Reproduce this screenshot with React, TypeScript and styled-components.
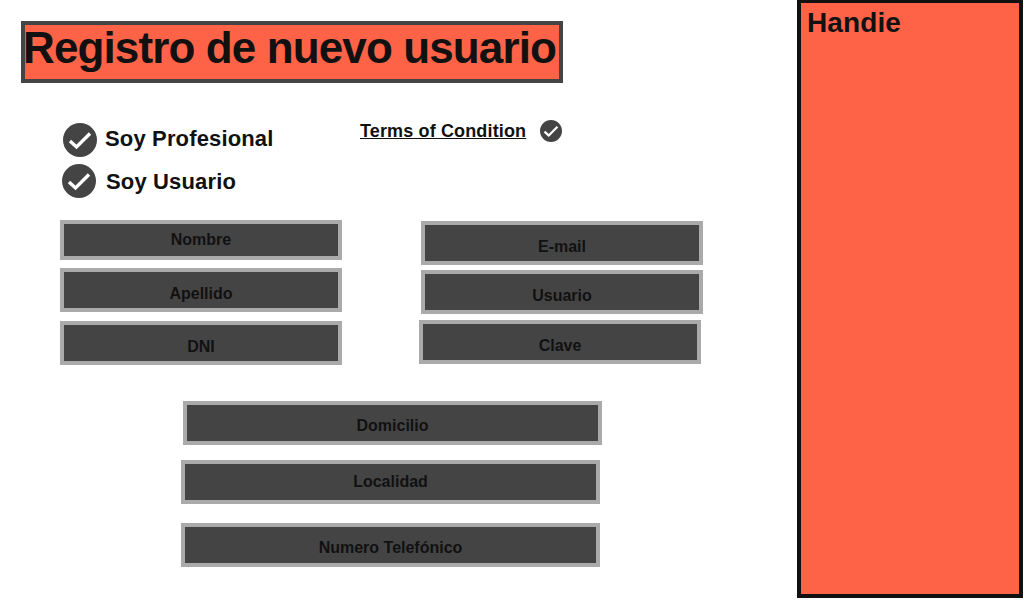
import React from 'react';
import styled, { createGlobalStyle } from 'styled-components';

const GlobalStyle = createGlobalStyle`
  body {
    margin: 0;
    background: #fff;
    color: #111;
    font-family: "Liberation Sans", Arial, sans-serif;
  }
`;

const Page = styled.div`
  display: flex;
  align-items: flex-start;
  width: 1024px;
  height: 600px;
  overflow: hidden;
`;

const Main = styled.main`
  box-sizing: border-box;
  width: 797px;
  padding: 21px 0 0 21px;
`;

const Title = styled.h1`
  box-sizing: border-box;
  width: 542px;
  height: 62px;
  margin: 0;
  border: 4px solid #444;
  background: tomato;
  font-size: 44px;
  font-weight: 700;
  line-height: 46px;
  letter-spacing: -0.02em;
  text-indent: -2px;
  white-space: nowrap;
`;

const TopRow = styled.div`
  display: flex;
  align-items: flex-start;
  margin-top: 37px;
  height: 78px;
`;

const Options = styled.div`
  display: flex;
  flex-direction: column;
  gap: 7px;
  width: 298px;
  margin: 3px 0 0 41px;
`;

const Option = styled.label<{ $indent?: number; $gap: number }>`
  display: flex;
  align-items: center;
  gap: ${(p) => p.$gap}px;
  margin-left: ${(p) => p.$indent ?? 0}px;
  font-size: 22px;
  font-weight: 700;
  letter-spacing: 0.15px;
  color: #111;

  svg {
    flex: none;
  }
`;

const OptionText = styled.span<{ $nudge: number }>`
  margin-top: ${(p) => p.$nudge}px;
`;

const Terms = styled.div`
  display: flex;
  align-items: center;
  gap: 14px;
  font-size: 18px;
  font-weight: 700;
  letter-spacing: 0.14px;

  span {
    text-decoration: underline;
  }
`;

const FieldColumns = styled.div`
  display: flex;
  align-items: flex-start;
  margin-top: 22px;
`;

const FieldColumn = styled.div<{ $left: number; $top?: number }>`
  display: flex;
  flex-direction: column;
  margin-left: ${(p) => p.$left}px;
  margin-top: ${(p) => p.$top ?? 0}px;
`;

const Field = styled.div<{
  $width?: number;
  $height?: number;
  $above?: number;
  $indent?: number;
  $drop?: number;
}>`
  box-sizing: border-box;
  display: flex;
  align-items: center;
  justify-content: center;
  width: ${(p) => p.$width ?? 282}px;
  height: ${(p) => p.$height ?? 44}px;
  margin-top: ${(p) => p.$above ?? 0}px;
  margin-left: ${(p) => p.$indent ?? 0}px;
  padding-top: ${(p) => p.$drop ?? 0}px;
  border: 4px solid #aaa;
  background: #444;
  color: #111;
  font-size: 16px;
  font-weight: 700;
`;

const AddressStack = styled.div`
  display: flex;
  flex-direction: column;
  margin-top: 36px;
`;

const Sidebar = styled.aside`
  box-sizing: border-box;
  width: 226px;
  height: 598px;
  padding: 4px 6px;
  border: 4px solid #111;
  border-top-width: 3px;
  background: tomato;
  color: #111;
  font-size: 28px;
  font-weight: 700;
  letter-spacing: 0.1px;
`;

const CheckIcon: React.FC<{ size: number }> = ({ size }) => (
  <svg width={size} height={size} viewBox="0 0 34 34" aria-hidden="true">
    <circle cx="17" cy="17" r="17" fill="#444" />
    <path d="M7 18l6.5 6L27 10.5" fill="none" stroke="#fff" strokeWidth="3.4" />
  </svg>
);

const App: React.FC = () => {
  return (
    <Page>
      <GlobalStyle />
      <Main>
        <Title>Registro de nuevo usuario</Title>

        <TopRow>
          <Options>
            <Option $indent={1} $gap={8}>
              <CheckIcon size={34} />
              <OptionText $nudge={-2}>Soy Profesional</OptionText>
            </Option>
            <Option $gap={10}>
              <CheckIcon size={34} />
              <OptionText $nudge={2}>Soy Usuario</OptionText>
            </Option>
          </Options>
          <Terms>
            <span>Terms of Condition</span>
            <CheckIcon size={22} />
          </Terms>
        </TopRow>

        <FieldColumns>
          <FieldColumn $left={39}>
            <Field $height={40}>Nombre</Field>
            <Field $above={8} $drop={8}>Apellido</Field>
            <Field $above={9} $drop={8}>DNI</Field>
          </FieldColumn>
          <FieldColumn $left={79} $top={1}>
            <Field $drop={8}>E-mail</Field>
            <Field $above={5} $drop={8}>Usuario</Field>
            <Field $above={6} $indent={-2} $drop={8}>Clave</Field>
          </FieldColumn>
        </FieldColumns>

        <AddressStack>
          <Field $width={419} $indent={162} $drop={6}>Domicilio</Field>
          <Field $width={419} $indent={160} $above={15}>Localidad</Field>
          <Field $width={419} $indent={160} $above={19} $drop={6}>Numero Telefónico</Field>
        </AddressStack>
      </Main>

      <Sidebar>Handie</Sidebar>
    </Page>
  );
};

export default App;
